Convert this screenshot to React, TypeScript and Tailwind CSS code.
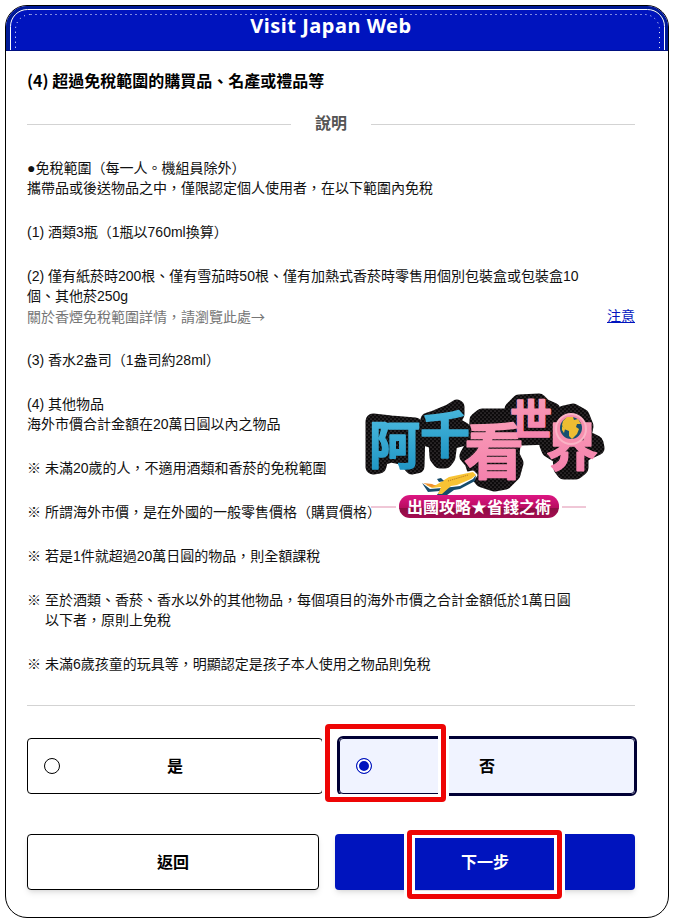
import { useState } from 'react';

interface Note {
  lines: string[];
}

const notes: Note[] = [
  { lines: ['未滿20歲的人，不適用酒類和香菸的免稅範圍'] },
  { lines: ['所謂海外市價，是在外國的一般零售價格（購買價格）'] },
  { lines: ['若是1件就超過20萬日圓的物品，則全額課稅'] },
  { lines: ['至於酒類、香菸、香水以外的其他物品，每個項目的海外市價之合計金額低於1萬日圓', '以下者，原則上免稅'] },
  { lines: ['未滿6歲孩童的玩具等，明顯認定是孩子本人使用之物品則免稅'] },
];

const logoChars = [
  { char: '阿', x: 369, y: 464, size: 51, fill: 'url(#blue)' },
  { char: '千', x: 420, y: 453, size: 50, fill: 'url(#blue)' },
  { char: '看', x: 464, y: 474, size: 60, fill: 'url(#pink)' },
  { char: '世', x: 510, y: 435, size: 42, fill: 'url(#pink)' },
  { char: '界', x: 546, y: 466, size: 52, fill: 'url(#pink)' },
];

function SiteLogo() {
  return (
    <svg viewBox="360 378 250 145" width="250" height="145" role="img" aria-label="阿千看世界" className="pointer-events-none absolute top-[372px] left-[354px] font-['Noto_Sans_CJK_TC',sans-serif]">
      <defs>
        <pattern id="dots" width="4" height="4" patternUnits="userSpaceOnUse">
          <rect width="4" height="4" fill="#0c0a0b" />
          <circle cx="1" cy="1" r="0.5" fill="#8d8588" />
          <circle cx="3" cy="3" r="0.5" fill="#8d8588" />
        </pattern>
        <linearGradient id="blue" x1="0" y1="0" x2="0" y2="1">
          <stop offset="0" stopColor="#52bfe2" />
          <stop offset="1" stopColor="#1a90c0" />
        </linearGradient>
        <linearGradient id="pink" x1="0" y1="0" x2="0" y2="1">
          <stop offset="0" stopColor="#f9a0b8" />
          <stop offset="1" stopColor="#f47dab" />
        </linearGradient>
        <linearGradient id="banner" x1="0" y1="0" x2="0" y2="1">
          <stop offset="0" stopColor="#dd1683" />
          <stop offset="0.55" stopColor="#b80d60" />
          <stop offset="0.55" stopColor="#8b0d42" />
          <stop offset="1" stopColor="#a50d52" />
        </linearGradient>
      </defs>

      {/* dotted backing */}
      <g fill="url(#dots)" stroke="url(#dots)" strokeWidth="15" strokeLinejoin="round" strokeLinecap="round">
        <path d="M373 421l18 2 24 2 3 6-1 35-5 1-7-9-14-3-10 3-2 8-6 1z" />
        <path d="M428 420l9-3 12-5 8-5 0 7-5 9 12 7 1 8-15 4-2 15-3 4-5 0-3-4-1-15-12-4z" />
        <path d="M477 420l5-4h25l5 6-2 9 3 14-1 10 4 8-3 11-8 8-11 2-12-4-7-9-3-9-5-6 5-9 4-5z" />
        <path d="M512 409l7-7 20-1 5 5 9 4 1 8-3 8 3 6-4 5-28 1-6-8z" />
        <path d="M557 420l7-7 9-2 9 5 4 10-2 11 12 6 1 5-11 5-5 4 0 11-5 4-12 0-3-4-1-11-11-7-2-5 8-8z" />
      </g>

      <g fontWeight="700" strokeLinejoin="round" strokeLinecap="round">
        {logoChars.map((c) => (
          <text key={c.char} x={c.x} y={c.y} fontSize={c.size} fill={c.fill} stroke={c.fill} strokeWidth="1.5">{c.char}</text>
        ))}
      </g>

      {/* globe */}
      <circle cx="571" cy="429" r="15" fill="#f78fae" stroke="#fab4c6" strokeWidth="2" />
      <circle cx="571" cy="428" r="11" fill="#17506f" />
      <path d="M563 421l4-4 6 0 1 3 4-1 3 5-4 0-1 3 3 2-2 5-5 5-3-3 0-5-5-2-2-4z" fill="#edbd32" />
      <path d="M562 426l3 3-1 4-2-3z" fill="#edbd32" />

      {/* plane */}
      <path d="M422 483l14 1 12-7 25-5 3 3-3 4-14 7-6 1-10 8-5 0 3-6-12 0z" fill="#fff" stroke="#fff" strokeWidth="3" strokeLinejoin="round" />
      <path d="M422 483l8 6 12-1 10-1 8-1 13-7 3-4-1 6-15 8-6 1-11 8-7-2 4-5-12 1z" fill="#164b6b" />
      <path d="M436 485l13-8 24-5 3 3-5 4-14 6-6 1-9 8-4 0 3-7-9 1-6-3z" fill="#f8c334" />
      <path d="M448 481l20-6" stroke="#b3741d" strokeWidth="1" strokeDasharray="1 1" />
      <path d="M423 483l9 1 4 2-5 1z" fill="#f0902f" />
      <path d="M437 479l4-1 3 3-5 1z" fill="#164b6b" />

      <path d="M371 507h25M562 507h24" stroke="#e08fae" strokeWidth="1" />
      <rect x="399" y="495" width="160" height="23" rx="11" fill="url(#banner)" />
      <text x="479" y="513" textAnchor="middle" fontSize="16" fontWeight="700" fill="#fff">出國攻略★省錢之術</text>
    </svg>
  );
}

function HeaderTrim() {
  return (
    <svg className="pointer-events-none absolute top-0 left-0 h-full w-full" fill="none" aria-hidden="true">
      <rect x="2" y="2" width="calc(100% - 4px)" height="90" rx="20" stroke="#001a96" strokeWidth="4" />
      <rect x="4" y="4" width="calc(100% - 8px)" height="90" rx="17" stroke="#fff" style={{ transform: 'translate(0.5px, -0.5px)' }} />
      <rect x="9" y="8" width="calc(100% - 18px)" height="90" rx="15" stroke="#fff" strokeDasharray="1 4" style={{ transform: 'translate(0.5px, 0.5px)' }} />
    </svg>
  );
}

export default function App() {
  const [answer, setAnswer] = useState('no');

  return (
    <main className="bg-white p-[5px] font-['Liberation_Sans','Noto_Sans_CJK_TC',sans-serif] text-sm leading-5 text-[#111]">
      <div className="relative overflow-hidden rounded-[22px] border border-black">
        <header className="relative h-[45px] border-b border-[#001080] bg-[#0014be] text-center">
          <HeaderTrim />
          <h1 className="relative pt-2 pr-3 font-['Noto_Sans',sans-serif] text-xl leading-6 font-bold tracking-wide text-white">Visit Japan Web</h1>
        </header>

        <div className="pt-[17px] pr-[33px] pb-[27px] pl-[21px]">
          <h2 className="font-['Noto_Sans_CJK_TC',sans-serif] text-base leading-6 font-bold text-black">(4) 超過免稅範圍的購買品、名產或禮品等</h2>
          <div className="mt-5 flex items-center gap-6">
            <span className="h-px flex-1 bg-[#d3d3d3]"></span>
            <h3 className="text-base leading-6 font-bold text-[#555]">說明</h3>
            <span className="h-px flex-1 bg-[#d3d3d3]"></span>
          </div>

          <p className="mt-[22px]">●免稅範圍（每一人。機組員除外）<br />攜帶品或後送物品之中，僅限認定個人使用者，在以下範圍內免稅</p>
          <p className="mt-6">(1) 酒類3瓶（1瓶以760ml換算）</p>
          <p className="mt-6">(2) 僅有紙菸時200根、僅有雪茄時50根、僅有加熱式香菸時零售用個別包裝盒或包裝盒10<br />個、其他菸250g</p>
          <div className="flex justify-between">
            <span className="font-['Noto_Sans_CJK_TC',sans-serif] text-[#767676]">關於香煙免稅範圍詳情，請瀏覽此處→</span>
            <a href="#notice" className="text-[#0014be] underline">注意</a>
          </div>
          <p className="mt-6">(3) 香水2盎司（1盎司約28ml）</p>
          <p className="mt-6">(4) 其他物品<br />海外市價合計金額在20萬日圓以內之物品</p>
          {notes.map((note) => (
            <p key={note.lines[0]} className="mt-6 flex gap-1">
              <span>※</span>
              <span>
                {note.lines.map((line) => (
                  <span key={line} className="block">{line}</span>
                ))}
              </span>
            </p>
          ))}

          <hr className="mt-[31px] border-[#d3d3d3]" />

          <div className="mt-8 grid grid-cols-2 gap-4">
            <label className="relative flex h-14 items-center justify-center rounded border border-black pt-0.5 text-base font-bold text-black has-checked:bg-[#f0f3ff] has-checked:outline-2 has-checked:outline-[#000035]">
              <input type="radio" name="answer" value="yes" checked={answer === 'yes'} onChange={() => setAnswer('yes')} className="absolute inset-y-0 left-4 my-auto size-4 appearance-none rounded-full border border-black bg-white checked:border-[#0014be] checked:bg-[#0014be] checked:shadow-[inset_0_0_0_2px_white]" />
              是
            </label>
            <label className="relative flex h-14 items-center justify-center rounded border border-black pt-0.5 text-base font-bold text-black has-checked:border-[#000035] has-checked:bg-[#f0f3ff] has-checked:outline-2 has-checked:outline-[#000035]">
              <input type="radio" name="answer" value="no" checked={answer === 'no'} onChange={() => setAnswer('no')} className="absolute inset-y-0 left-4 my-auto size-4 appearance-none rounded-full border border-black bg-white checked:border-[#0014be] checked:bg-[#0014be] checked:shadow-[inset_0_0_0_2px_white]" />
              否
              <span className="pointer-events-none absolute -top-[18px] -left-[18px] h-[84px] w-[127px] border-3 border-white">
                <span className="block h-full rounded-sm border-5 border-[#ee0505]">
                  <span className="block h-full border-3 border-white"></span>
                </span>
              </span>
            </label>
          </div>

          <div className="mt-10 grid grid-cols-[292fr_300fr] gap-4">
            <button type="button" className="h-14 rounded border border-black bg-white pt-0.5 text-base font-bold text-black shadow-md">返回</button>
            <button type="button" className="relative h-14 rounded bg-[#0014be] pt-0.5 text-base font-bold text-white shadow-md">
              下一步
              <span className="pointer-events-none absolute -top-[7px] left-[69px] h-[75px] w-[161px] border-3 border-white">
                <span className="block h-full rounded-sm border-5 border-[#ee0505]">
                  <span className="block h-full border-3 border-white"></span>
                </span>
              </span>
            </button>
          </div>
        </div>
        <SiteLogo />
      </div>
    </main>
  );
}
